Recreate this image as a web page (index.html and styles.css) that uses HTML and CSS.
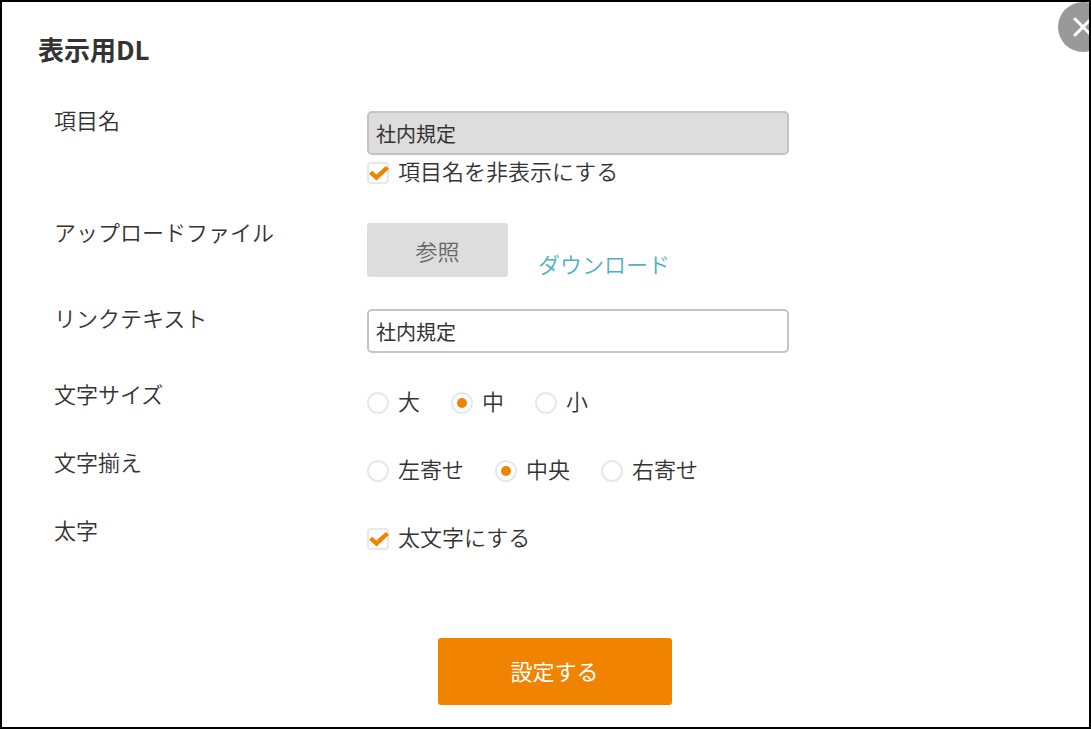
FILE: index.html
```
<!DOCTYPE html>
<html lang="ja">
<head>
  <meta charset="UTF-8" />
  <meta name="viewport" content="width=device-width, initial-scale=1" />
  <title>表示用DL</title>
  <link rel="stylesheet" href="styles.css">
</head>
<body>
  <main class="modal">
    <button type="button" class="close-button" aria-label="閉じる">
      <svg width="50" height="50" viewBox="0 0 50 50">
        <path d="M17 17 L33 33 M33 17 L17 33" fill="none" stroke="#fff" stroke-width="3" stroke-linecap="round" />
      </svg>
    </button>

    <h1 class="modal-title">表示用DL</h1>

    <form class="settings">
      <div class="row">
        <label class="row-label" for="item-name">項目名</label>
        <div class="field">
          <input type="text" class="text-input" id="item-name" value="社内規定" readonly>
          <label class="choice"><input type="checkbox" checked>項目名を非表示にする</label>
        </div>
      </div>

      <div class="row">
        <label class="row-label" for="browse">アップロードファイル</label>
        <div class="field upload">
          <button type="button" class="browse-button" id="browse">参照</button>
          <a href="#" class="download">ダウンロード</a>
        </div>
      </div>

      <div class="row">
        <label class="row-label" for="link-text">リンクテキスト</label>
        <div class="field">
          <input type="text" class="text-input" id="link-text" value="社内規定">
        </div>
      </div>

      <div class="row" role="radiogroup" aria-labelledby="size-label">
        <span class="row-label" id="size-label">文字サイズ</span>
        <div class="field choices">
          <label class="choice"><input type="radio" name="size">大</label>
          <label class="choice"><input type="radio" name="size" checked>中</label>
          <label class="choice"><input type="radio" name="size">小</label>
        </div>
      </div>

      <div class="row" role="radiogroup" aria-labelledby="align-label">
        <span class="row-label" id="align-label">文字揃え</span>
        <div class="field choices">
          <label class="choice"><input type="radio" name="align">左寄せ</label>
          <label class="choice"><input type="radio" name="align" checked>中央</label>
          <label class="choice"><input type="radio" name="align">右寄せ</label>
        </div>
      </div>

      <div class="row" role="group" aria-labelledby="bold-label">
        <span class="row-label" id="bold-label">太字</span>
        <div class="field">
          <label class="choice"><input type="checkbox" checked>太文字にする</label>
        </div>
      </div>

      <button type="submit" class="submit-button">設定する</button>
    </form>
  </main>
</body>
</html>
```
FILE: styles.css
```
* {
  box-sizing: border-box;
}

body {
  margin: 0;
  background-color: #fff;
  color: #333;
  font-family: "Noto Sans CJK JP", sans-serif;
  font-size: 22px;
  font-weight: 350;
}

input, button {
  font-family: inherit;
  font-weight: inherit;
  margin: 0;
}

.modal {
  position: relative;
  overflow: hidden;
  min-height: 100vh;
  border: 2px solid #000;
  padding: 30px 18px 20px 36px;
}

.close-button {
  position: absolute;
  top: 0;
  right: -19px;
  width: 50px;
  height: 50px;
  padding: 0;
  border: none;
  border-radius: 50%;
  background-color: #999;
  cursor: pointer;
}

.close-button svg {
  display: block;
}

.modal-title {
  margin: 0 0 39px;
  font-size: 26px;
  font-weight: 700;
  line-height: 34px;
}

.settings {
  display: flex;
  flex-direction: column;
  gap: 26px;
}

.row {
  display: grid;
  grid-template-columns: 313px 1fr;
  padding-left: 16px;
}

.row-label {
  line-height: 28px;
}

.field {
  max-width: 422px;
  padding-top: 6px;
}

.text-input {
  display: block;
  width: 100%;
  height: 44px;
  padding: 0 7px;
  border: 2px solid #c4c4c4;
  border-radius: 5px;
  background-color: #fff;
  color: #333;
  font-size: 20px;
  font-weight: 400;
}

.text-input:read-only {
  background-color: #ddd;
}

.upload {
  display: flex;
  align-items: flex-end;
  gap: 30px;
}

.browse-button {
  width: 141px;
  height: 54px;
  border: none;
  border-radius: 3px;
  background-color: #ddd;
  color: #666;
  font-size: 22px;
}

.download {
  color: #4db1c4;
  line-height: 28px;
  text-decoration: none;
}

.choices {
  display: flex;
  gap: 31px;
}

.choice {
  display: flex;
  align-items: center;
  gap: 9px;
  padding-bottom: 6px;
  line-height: 30px;
}

.choice input {
  appearance: none;
  display: grid;
  place-items: center;
  width: 22px;
  height: 22px;
  margin-top: 6px;
  border: 2px solid #e8e8e8;
  background-color: #fff;
}

.choice input[type="radio"] {
  border-radius: 50%;
}

.choice input[type="radio"]:checked::before {
  content: "";
  width: 10px;
  height: 10px;
  border-radius: 50%;
  background-color: #f08300;
}

.choice input[type="checkbox"] {
  border-radius: 4px;
}

.choice input[type="checkbox"]:checked::before {
  content: "";
  width: 20px;
  height: 16px;
  background-color: #f08300;
  clip-path: polygon(0 55%, 16% 36%, 37% 60%, 84% 6%, 100% 23%, 38% 97%);
}

.submit-button {
  align-self: center;
  width: 234px;
  height: 67px;
  margin-top: 55px;
  padding: 0 0 4px;
  border: none;
  border-radius: 3px;
  background-color: #f08300;
  color: #fff;
  font-size: 22px;
  font-weight: 400;
  cursor: pointer;
}
```
